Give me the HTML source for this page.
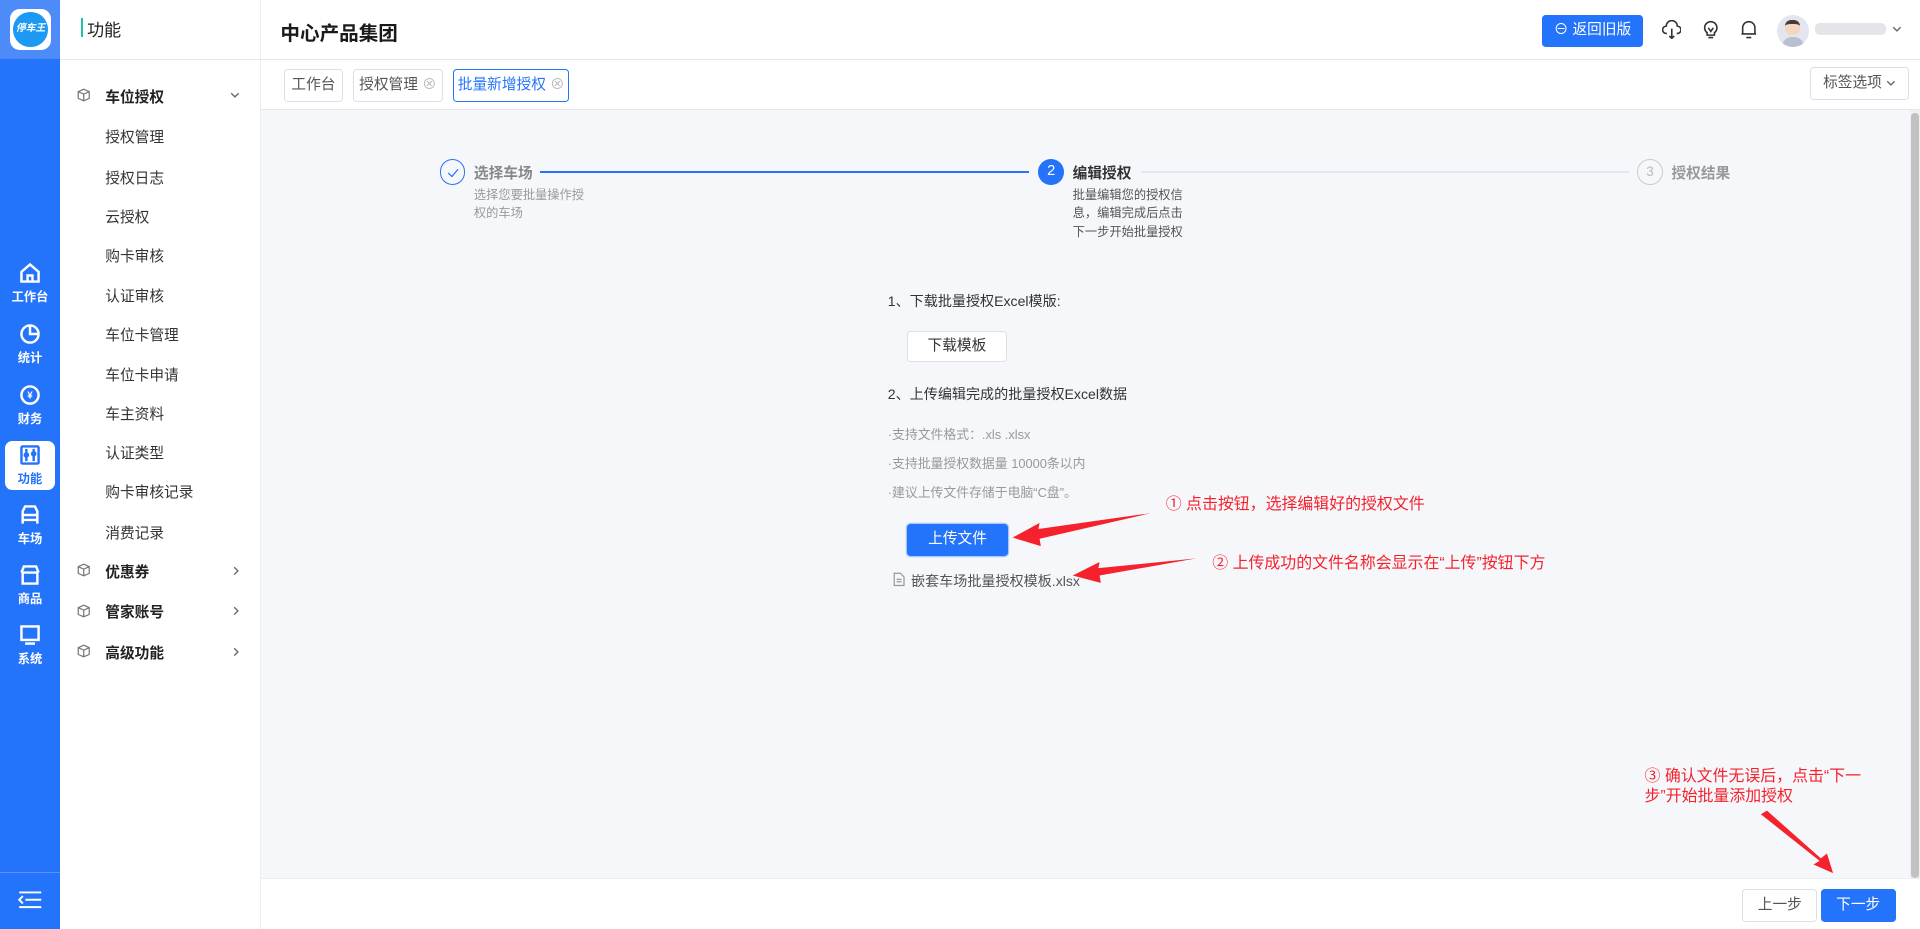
<!DOCTYPE html>
<html><head><meta charset="utf-8"><style>
*{margin:0;padding:0;box-sizing:border-box}
html,body{width:1920px;height:929px;overflow:hidden;background:#fff}
#root{zoom:1.2245;width:1568px;height:759px;position:relative;font-family:"Liberation Sans","Noto Sans CJK SC",sans-serif;color:#303133;font-size:12px}
.a{position:absolute}
.nav{left:0;top:0;width:49px;height:759px;background:#2473fb}
.navtop{left:0;top:0;width:49px;height:48px;background:#4d8bf8}
.logo{left:8px;top:7px;width:34px;height:34px;background:#fff;border-radius:8px}
.logo i{position:absolute;left:3px;top:3px;width:28px;height:28px;border-radius:50%;background:#1c9af3;color:#fff;font-size:8px;font-style:italic;font-weight:bold;line-height:28px;text-align:center}
.ni{left:0;width:49px;text-align:center;color:#fff;font-size:10px;font-weight:bold}
.ni svg{display:block;margin:0 auto 2px}
.sub{left:49px;top:0;width:164px;height:759px;background:#fff;border-right:1px solid #eceef2}
.mi{left:86px;font-size:12px;color:#333}
.mg{left:86px;font-size:12px;color:#222;font-weight:bold}
.cube{left:63px}
.chev{left:188px}
.btn{border:1px solid #dcdfe6;border-radius:3px;background:#fff;text-align:center}
.red{color:#f5222d;font-size:13px}
.sm{font-size:11.5px}
</style></head><body><div id="root">
<div class="a nav"></div><div class="a navtop"></div>
<div class="a logo"><i>停车王</i></div>
<div class="a ni" style="top:214px"><svg width="18" height="18" viewBox="0 0 18 18" fill="none" stroke="#fff" stroke-width="2"><path d="M2 8L9 2l7 6v8H2z"/><path d="M7 16v-5h4v5"/></svg>工作台</div>
<div class="a ni" style="top:264px"><svg width="18" height="18" viewBox="0 0 18 18" fill="none" stroke="#fff" stroke-width="2"><circle cx="9" cy="9" r="7"/><path d="M9 2v7h7"/></svg>统计</div>
<div class="a ni" style="top:314px"><svg width="18" height="18" viewBox="0 0 18 18" fill="none" stroke="#fff" stroke-width="2"><circle cx="9" cy="9" r="7"/><text x="9" y="12" font-size="8" fill="#fff" stroke="none" text-anchor="middle">¥</text></svg>财务</div>
<div class="a" style="left:4px;top:360px;width:41px;height:40px;background:#fff;border-radius:6px"></div>
<div class="a ni" style="top:363px;color:#2473fb"><svg width="18" height="18" viewBox="0 0 18 18" fill="none" stroke="#2473fb" stroke-width="2"><rect x="2" y="2" width="14" height="14" rx="1"/><path d="M6 4v10M12 4v10"/><circle cx="6" cy="9" r="1.3"/><circle cx="12" cy="8" r="1.3"/></svg>功能</div>
<div class="a ni" style="top:412px"><svg width="18" height="18" viewBox="0 0 18 18" fill="none" stroke="#fff" stroke-width="2"><path d="M3 16V6l2-4h8l2 4v10M3 9h12M3 13h12"/></svg>车场</div>
<div class="a ni" style="top:461px"><svg width="18" height="18" viewBox="0 0 18 18" fill="none" stroke="#fff" stroke-width="2"><path d="M3 7h12v9H3zM2 7l2-5h10l2 5"/></svg>商品</div>
<div class="a ni" style="top:510px"><svg width="18" height="18" viewBox="0 0 18 18" fill="none" stroke="#fff" stroke-width="2"><rect x="2" y="2" width="14" height="11"/><path d="M5 16h8"/></svg>系统</div>
<div class="a" style="left:0;top:712px;width:49px;height:1px;background:#5a92f8"></div>
<svg class="a" style="left:15px;top:727px" width="20" height="16" viewBox="0 0 20 16" stroke="#fff" stroke-width="1.6"><path d="M1 2h18M6 8h13M1 14h18M4 5L1 8l3 3" fill="none"/></svg>

<div class="a sub"></div>
<div class="a" style="left:49px;top:48px;width:164px;height:1px;background:#e6e8ee"></div>
<div class="a" style="left:66px;top:15px;width:2px;height:15px;background:#19c3a6"></div>
<div class="a" style="left:71px;top:13px;font-size:14px;color:#222">功能</div>
<svg width="0" height="0" style="position:absolute"><defs><g id="cb" fill="none" stroke="#777" stroke-width="1"><path d="M5.5 1L10 3v5.5L5.5 10.5 1 8.5V3zM1 3l4.5 2L10 3M5.5 5v5.5"/></g><path id="cv" d="M1 1l3 3 3-3" fill="none" stroke="#666" stroke-width="1.1"/><path id="cr" d="M1 1l3 3-3 3" fill="none" stroke="#666" stroke-width="1.1"/></defs></svg>
<svg class="a cube" style="top:72px" width="11" height="12"><use href="#cb"/></svg><div class="a mg" style="top:70px">车位授权</div><svg class="a chev" style="top:75px" width="8" height="6"><use href="#cv"/></svg>
<div class="a mi" style="top:103px">授权管理</div>
<div class="a mi" style="top:136px">授权日志</div>
<div class="a mi" style="top:168px">云授权</div>
<div class="a mi" style="top:200px">购卡审核</div>
<div class="a mi" style="top:233px">认证审核</div>
<div class="a mi" style="top:265px">车位卡管理</div>
<div class="a mi" style="top:297px">车位卡申请</div>
<div class="a mi" style="top:329px">车主资料</div>
<div class="a mi" style="top:361px">认证类型</div>
<div class="a mi" style="top:393px">购卡审核记录</div>
<div class="a mi" style="top:426px">消费记录</div>
<svg class="a cube" style="top:460px" width="11" height="12"><use href="#cb"/></svg><div class="a mg" style="top:458px">优惠券</div><svg class="a chev" style="top:462px;left:190px" width="6" height="8"><use href="#cr"/></svg>
<svg class="a cube" style="top:493px" width="11" height="12"><use href="#cb"/></svg><div class="a mg" style="top:491px">管家账号</div><svg class="a chev" style="top:495px;left:190px" width="6" height="8"><use href="#cr"/></svg>
<svg class="a cube" style="top:526px" width="11" height="12"><use href="#cb"/></svg><div class="a mg" style="top:524px">高级功能</div><svg class="a chev" style="top:528px;left:190px" width="6" height="8"><use href="#cr"/></svg>

<div class="a" style="left:213px;top:48px;width:1355px;height:1px;background:#e4e6eb"></div>
<div class="a" style="left:229px;top:14px;font-size:16px;font-weight:bold;color:#1a1a1a">中心产品集团</div>
<div class="a" style="left:1259px;top:12px;width:83px;height:26px;background:#2473fb;border-radius:3px;color:#fff;font-size:12px;line-height:26px;text-align:center">⊖ 返回旧版</div>
<svg class="a" style="left:1357px;top:16px" width="16" height="16" viewBox="0 0 16 16" fill="none" stroke="#333" stroke-width="1.3"><path d="M4 11H3.5a3 3 0 010-6 4.5 4.5 0 019 0 3 3 0 010 6H12M8 7v8M6 13l2 2 2-2"/></svg>
<svg class="a" style="left:1389px;top:15px" width="16" height="17" viewBox="0 0 16 17" fill="none" stroke="#333" stroke-width="1.3"><path d="M5 12a5 5 0 116 0v2H5zM6 16h4M6 8l2 3 2-3"/></svg>
<svg class="a" style="left:1420px;top:15px" width="16" height="17" viewBox="0 0 16 17" fill="none" stroke="#333" stroke-width="1.3"><path d="M3 13V8a5 5 0 0110 0v5zM2 13h12M6 16h4"/></svg>
<div class="a" style="left:1451px;top:12px;width:26px;height:26px;border-radius:50%;background:#e3e6ee;overflow:hidden"><div class="a" style="left:7px;top:4px;width:12px;height:13px;border-radius:5px;background:#f5d6c0;border-top:4px solid #4a3a35"></div><div class="a" style="left:4px;top:18px;width:18px;height:10px;border-radius:8px 8px 0 0;background:#b8bfd0"></div></div>
<div class="a" style="left:1482px;top:19px;width:58px;height:10px;background:#e4e5e8;border-radius:4px"></div>
<svg class="a" style="left:1545px;top:21px" width="8" height="6"><use href="#cv"/></svg>

<div class="a btn" style="left:232px;top:56px;width:48px;height:27px;line-height:25px;color:#555">工作台</div>
<div class="a btn" style="left:288px;top:56px;width:74px;height:27px;line-height:25px;color:#555">授权管理 <span style="color:#bbb">⊗</span></div>
<div class="a btn" style="left:370px;top:56px;width:95px;height:27px;line-height:25px;color:#2473fb;border-color:#2473fb">批量新增授权 <span style="color:#bbb">⊗</span></div>
<div class="a btn" style="left:1478px;top:55px;width:81px;height:27px;line-height:25px;color:#555">标签选项 <svg width="8" height="6" style="vertical-align:middle"><use href="#cv"/></svg></div>
<div class="a" style="left:213px;top:89px;width:1355px;height:1px;background:#e4e6eb"></div>

<div class="a" style="left:213px;top:90px;width:1347px;height:627px;background:#f5f7fa"></div>
<div class="a" style="left:1560px;top:90px;width:8px;height:627px;background:#f0f0f0"></div>
<div class="a" style="left:1561px;top:92px;width:6px;height:625px;background:#c1c1c1;border-radius:3px"></div>

<div class="a" style="left:359px;top:130px;width:21px;height:21px;border:1px solid #2473fb;border-radius:50%"><svg class="a" style="left:5px;top:6px" width="10" height="8"><path d="M1 4l3 3 5-6" fill="none" stroke="#2473fb" stroke-width="1"/></svg></div>
<div class="a" style="left:387px;top:132px;font-size:12px;color:#888;font-weight:bold">选择车场</div>
<div class="a" style="left:441px;top:140px;width:399px;height:1px;background:#2473fb"></div>
<div class="a" style="left:387px;top:152px;font-size:10px;color:#999;line-height:15px;width:95px">选择您要批量操作授权的车场</div>
<div class="a" style="left:848px;top:130px;width:21px;height:21px;background:#2473fb;border-radius:50%;color:#fff;font-size:12px;text-align:center;line-height:21px">2</div>
<div class="a" style="left:876px;top:132px;font-size:12px;color:#333;font-weight:bold">编辑授权</div>
<div class="a" style="left:932px;top:140px;width:398px;height:1px;background:#e4e6eb"></div>
<div class="a" style="left:876px;top:152px;font-size:10px;color:#555;line-height:15px;width:95px">批量编辑您的授权信息，编辑完成后点击下一步开始批量授权</div>
<div class="a" style="left:1337px;top:130px;width:21px;height:21px;border:1px solid #ccc;border-radius:50%;color:#bbb;font-size:11px;text-align:center;line-height:19px">3</div>
<div class="a" style="left:1365px;top:132px;font-size:12px;color:#999;font-weight:bold">授权结果</div>

<div class="a sm" style="left:725px;top:238px;color:#333">1、下载批量授权Excel模版:</div>
<div class="a btn" style="left:741px;top:270px;width:81px;height:26px;line-height:24px;color:#333">下载模板</div>
<div class="a sm" style="left:725px;top:314px;color:#333">2、上传编辑完成的批量授权Excel数据</div>
<div class="a" style="left:725px;top:346px;font-size:10.5px;color:#999">·支持文件格式：.xls .xlsx</div>
<div class="a" style="left:725px;top:370px;font-size:10.5px;color:#999">·支持批量授权数据量 10000条以内</div>
<div class="a" style="left:725px;top:394px;font-size:10.5px;color:#999">·建议上传文件存储于电脑“C盘”。</div>
<div class="a" style="left:741px;top:428px;width:82px;height:26px;background:#2473fb;border-radius:3px;color:#fff;line-height:26px;text-align:center;box-shadow:0 0 0 1px #a9c6fb">上传文件</div>
<svg class="a" style="left:729px;top:467px" width="10" height="12" viewBox="0 0 10 12" fill="none" stroke="#999"><path d="M1 1h5l3 3v7H1zM3 6h4M3 8h4"/></svg>
<div class="a sm" style="left:744px;top:466px;color:#555">嵌套车场批量授权模板.xlsx</div>
<div class="a red" style="left:952px;top:401px">① 点击按钮，选择编辑好的授权文件</div>
<div class="a red" style="left:990px;top:449px">② 上传成功的文件名称会显示在“上传”按钮下方</div>
<div class="a red" style="left:1343px;top:626px;line-height:17px;width:200px">③ 确认文件无误后，点击“下一步”开始批量添加授权</div>
<svg class="a" style="left:0;top:0" width="1568" height="759"><g fill="#f5222d"><path d="M940 419L848 432L849 427L827 439L850 446L849 440Z"/><path d="M977 456L897 464L898 459L876 470L899 476L898 470Z"/><path d="M1438 665L1443 662L1487 701L1492 697L1497 713L1481 706L1486 703Z"/></g></svg>

<div class="a" style="left:213px;top:717px;width:1355px;height:42px;background:#fff;border-top:1px solid #eceef2"></div>
<div class="a btn" style="left:1423px;top:726px;width:61px;height:27px;line-height:25px;color:#555">上一步</div>
<div class="a" style="left:1487px;top:726px;width:61px;height:27px;line-height:27px;color:#fff;background:#2473fb;border-radius:3px;text-align:center">下一步</div>
</div></body></html>
